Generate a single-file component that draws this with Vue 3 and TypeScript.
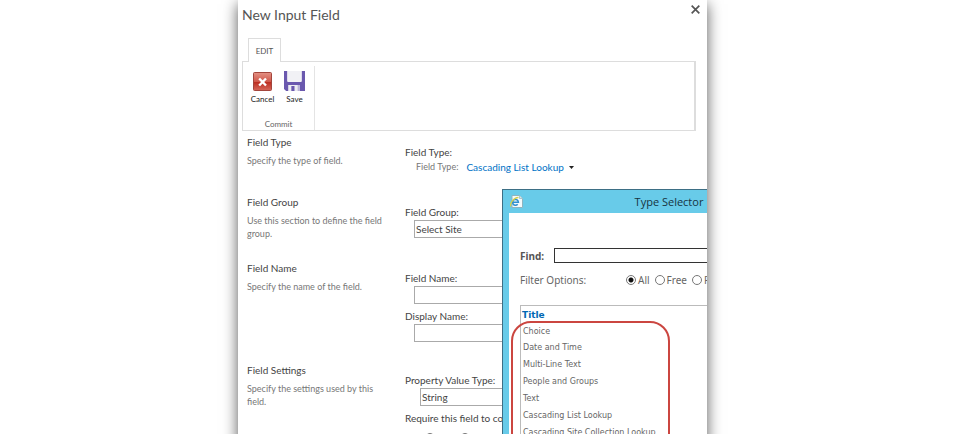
<script setup lang="ts">
import { ref } from 'vue'

const fieldGroup = ref('Select Site')
const valueType = ref('String')
const fieldName = ref('')
const displayName = ref('')
const required = ref('')
const find = ref('')
const filter = ref('All')

const filters: string[] = ['All', 'Free', 'Premium']
const types: string[] = [
  'Choice',
  'Date and Time',
  'Multi-Line Text',
  'People and Groups',
  'Text',
  'Cascading List Lookup',
  'Cascading Site Collection Lookup',
]
</script>

<template>
  <div class="page">
    <main class="panel">
      <header class="panel-head">
        <h1>New Input Field</h1>
        <button class="close" type="button" aria-label="Close">
          <svg viewBox="0 0 8 8" width="9" height="9"><path d="M.6.6l6.800 6.800M7.400.6L.6 7.400" stroke="#555" stroke-width="1.500" fill="none" /></svg>
        </button>
      </header>

      <div class="tabs"><button class="tab" type="button">EDIT</button></div>
      <div class="ribbon">
        <div class="group">
          <div class="actions">
            <button class="action" type="button">
              <svg viewBox="0 0 20 20" width="20" height="20">
                <defs>
                  <linearGradient id="red" x1="0" y1="0" x2="0" y2="1">
                    <stop offset="0" stop-color="#e39184" />
                    <stop offset=".5" stop-color="#d0594c" />
                    <stop offset=".55" stop-color="#bd2f22" />
                    <stop offset="1" stop-color="#d5675a" />
                  </linearGradient>
                </defs>
                <rect x=".5" y="1.500" width="18" height="18" rx="1" fill="url(#red)" stroke="#a3453c" />
                <path d="M6.200 7.500l6.800 7M13 7.500l-6.800 7" stroke="#fff" stroke-width="2.400" fill="none" />
              </svg>
              <span>Cancel</span>
            </button>
            <button class="action" type="button">
              <svg viewBox="0 0 20 20" width="21" height="20" preserveAspectRatio="none">
                <path d="M0 0h20v20H2l-2-2z" fill="#6a58ae" />
                <path d="M3 0h14v10q0 1-1 1H4q-1 0-1-1z" fill="#f1f1f5" />
                <path d="M4 14h11v6H4z" fill="#ececf2" />
                <path d="M7 15h3v5H7z" fill="#6a58ae" />
                <path d="M13 14h2v6h-2z" fill="#b9b2d8" />
              </svg>
              <span>Save</span>
            </button>
          </div>
          <div class="group-name">Commit</div>
        </div>
      </div>

      <form class="sections" @submit.prevent>
        <section>
          <div class="about">
            <h2>Field Type</h2>
            <p>Specify the type of field.</p>
          </div>
          <div class="fields">
            <h3>Field Type:</h3>
            <div class="type-row">
              <span>Field Type:</span>
              <a href="#">Cascading List Lookup</a>
              <svg viewBox="0 0 5 3" width="5" height="3"><path d="M0 0h5L2.500 3z" fill="#222" /></svg>
            </div>
          </div>
        </section>
        <section>
          <div class="about">
            <h2>Field Group</h2>
            <p>Use this section to define the field group.</p>
          </div>
          <div class="fields">
            <label for="group">Field Group:</label>
            <select id="group" v-model="fieldGroup" class="control"><option>Select Site</option></select>
          </div>
        </section>
        <section>
          <div class="about">
            <h2>Field Name</h2>
            <p>Specify the name of the field.</p>
          </div>
          <div class="fields">
            <label for="name">Field Name:</label>
            <input id="name" v-model="fieldName" class="control" type="text" />
            <label for="display">Display Name:</label>
            <input id="display" v-model="displayName" class="control" type="text" />
          </div>
        </section>
        <section>
          <div class="about">
            <h2>Field Settings</h2>
            <p>Specify the settings used by this field.</p>
          </div>
          <div class="fields">
            <label for="value-type">Property Value Type:</label>
            <select id="value-type" v-model="valueType" class="control inset"><option>String</option></select>
            <h3>Require this field to contain</h3>
            <div class="choices">
              <label><input v-model="required" type="radio" name="required" value="Yes" />Yes</label>
              <label><input v-model="required" type="radio" name="required" value="No" />No</label>
            </div>
          </div>
        </section>
      </form>

      <div class="dialog" role="dialog" aria-labelledby="dialog-title">
        <div class="dialog-head">
          <svg viewBox="0 0 13 13" width="13" height="13">
            <path d="M2 .5h7.500l3 3v9H2z" fill="#f4fafc" stroke="#8fb4bf" />
            <path d="M9.500.5v3h3" fill="#d4e6ec" stroke="#8fb4bf" stroke-width=".7" />
            <path d="M2.600 7.200h5.800a2.900 2.900 0 1 0-.7 2.100" fill="none" stroke="#2f8fd0" stroke-width="1.500" />
            <path d="M1 11.500C-.8 9 3.500 2.500 8.500 2.300" fill="none" stroke="#d8d04a" stroke-width="1.200" />
          </svg>
          <h2 id="dialog-title">Type Selector</h2>
        </div>
        <div class="dialog-body">
          <div class="find">
            <label for="find">Find:</label>
            <input id="find" v-model="find" type="text" />
          </div>
          <div class="filter" role="radiogroup" aria-label="Filter Options">
            <span>Filter Options:</span>
            <div class="filter-choices">
              <label v-for="f in filters" :key="f"><input v-model="filter" type="radio" name="filter" :value="f" />{{ f }}</label>
            </div>
          </div>
          <table>
            <thead><tr><th scope="col">Title</th></tr></thead>
            <tbody><tr v-for="t in types" :key="t"><td>{{ t }}</td></tr></tbody>
          </table>
          <div class="highlight"></div>
        </div>
      </div>
    </main>
  </div>
</template>

<style>
body {
  background: #fff;
}
</style>

<style scoped>
* {
  box-sizing: border-box;
}

h1, h2, h3, p {
  margin: 0;
  font-size: inherit;
  font-weight: 400;
}

button, input, select {
  margin: 0;
  padding: 0;
  color: inherit;
  font: inherit;
}

button {
  border: 0;
  background: none;
}

.page {
  display: grid;
  grid-template-columns: 238fr 469fr 253fr;
  height: 100vh;
  overflow: hidden;
  color: #444;
  font: 10px/14px Lato, "Open Sans", sans-serif;
}

.panel {
  position: relative;
  grid-column: 2;
  min-width: 0;
  height: calc(100vh + 30px);
  overflow: hidden;
  background: #fff;
  box-shadow: 0 4px 14px rgba(0, 0, 0, 0.65);
}

.panel-head {
  display: flex;
  justify-content: space-between;
  align-items: flex-start;
  padding: 5px 7px 0 4px;
}

h1 {
  color: #555;
  font-size: 14px;
  line-height: 20px;
}

.close {
  display: flex;
}

.tabs {
  display: flex;
  margin-top: 13px;
  padding-left: 10px;
}

.tab {
  height: 24px;
  width: 33px;
  margin-bottom: -1px;
  border: 1px solid #ddd;
  border-bottom: 0;
  background: #fff;
  color: #555;
  font-size: 8px;
  z-index: 1;
}

.ribbon {
  display: flex;
  margin: 0 11px 0 4px;
  padding-top: 4px;
  border: 1px solid #ddd;
  border-right-width: 2px;
}

.group {
  display: flex;
  flex-direction: column;
  align-items: center;
  gap: 13px;
  width: 72px;
  border-right: 1px solid #e4e4e4;
}

.actions {
  display: flex;
  gap: 8px;
  padding-top: 5px;
}

.action {
  display: flex;
  flex-direction: column;
  align-items: center;
  gap: 2px;
  min-width: 24px;
  color: #222;
  font-size: 8px;
  line-height: 12px;
}

.group-name {
  color: #666;
  font-size: 8px;
  line-height: 12px;
}

.sections {
  padding: 4px 0 0 9px;
}

section {
  display: grid;
  grid-template-columns: 158px 1fr;
  padding-bottom: 21px;
}

.about {
  padding-right: 16px;
}

.about p {
  margin-top: 5px;
  color: #777;
  font-size: 9px;
  line-height: 13px;
}

.fields {
  display: flex;
  flex-direction: column;
  padding-top: 10px;
}

.control {
  height: 18px;
  margin: 1px 11px 5px 9px;
  padding: 0 1px;
  border: 1px solid #aaa;
  border-radius: 0;
  background: #fff;
}

.control:last-child {
  margin-bottom: 0;
}

.inset {
  margin-left: 15px;
}

select {
  appearance: none;
}

.type-row {
  display: flex;
  align-items: center;
  gap: 5px;
  padding: 1px 0 0 11px;
}

.type-row span {
  margin-right: 3px;
  color: #777;
  font-size: 9px;
}

a {
  color: #0072c6;
  text-decoration: none;
}

.choices {
  display: flex;
  gap: 8px;
  padding: 6px 0 0 20px;
}

.choices label,
.filter-choices label {
  display: flex;
  align-items: center;
  gap: 2px;
}

input[type="radio"] {
  width: 10px;
  height: 10px;
  appearance: none;
  border: 1px solid #777;
  border-radius: 50%;
  background: #fff;
}

input[type="radio"]:checked {
  background: radial-gradient(circle, #111 2px, #fff 3px);
}

.dialog {
  position: absolute;
  top: 189px;
  left: 264px;
  width: 333px;
  height: 400px;
  padding: 0 6px 6px;
  border: 1px solid #3d6f85;
  background: #68cbe9;
}

.dialog-head {
  display: grid;
  grid-template-columns: 1fr auto 1fr;
  align-items: center;
  height: 23px;
  padding-left: 1px;
  color: #17343f;
}

.dialog-head h2 {
  font: 11px/16px "Open Sans", sans-serif;
}

.dialog-body {
  position: relative;
  height: 100%;
  padding: 35px 11px 0;
  background: #fff;
  color: #666;
  font: 10px/14px "Noto Sans", sans-serif;
}

.find {
  display: flex;
  align-items: center;
  gap: 10px;
}

.find label {
  color: #555;
  font-weight: 700;
}

.find input {
  flex: 1;
  height: 15px;
  border: 1px solid #333;
}

.filter {
  display: flex;
  align-items: center;
  padding-top: 10px;
}

.filter > span {
  flex: 0 0 106px;
}

.filter-choices {
  display: flex;
  gap: 5px;
}

table {
  width: 100%;
  margin-top: 18px;
  border: 1px solid #bbb;
  border-collapse: separate;
  border-spacing: 0;
  font-family: "DejaVu Sans", sans-serif;
  text-align: left;
}

th {
  padding: 0 1px;
  color: #0068b4;
  font-size: 9px;
  line-height: 18px;
}

td {
  padding: 0 2px;
  font-size: 8px;
  line-height: 17px;
}

tbody tr:first-child td {
  line-height: 15px;
}

.highlight {
  position: absolute;
  top: 108px;
  left: 2px;
  width: 159px;
  height: 150px;
  border: 2px solid #cb4640;
  border-radius: 20px;
}
</style>
